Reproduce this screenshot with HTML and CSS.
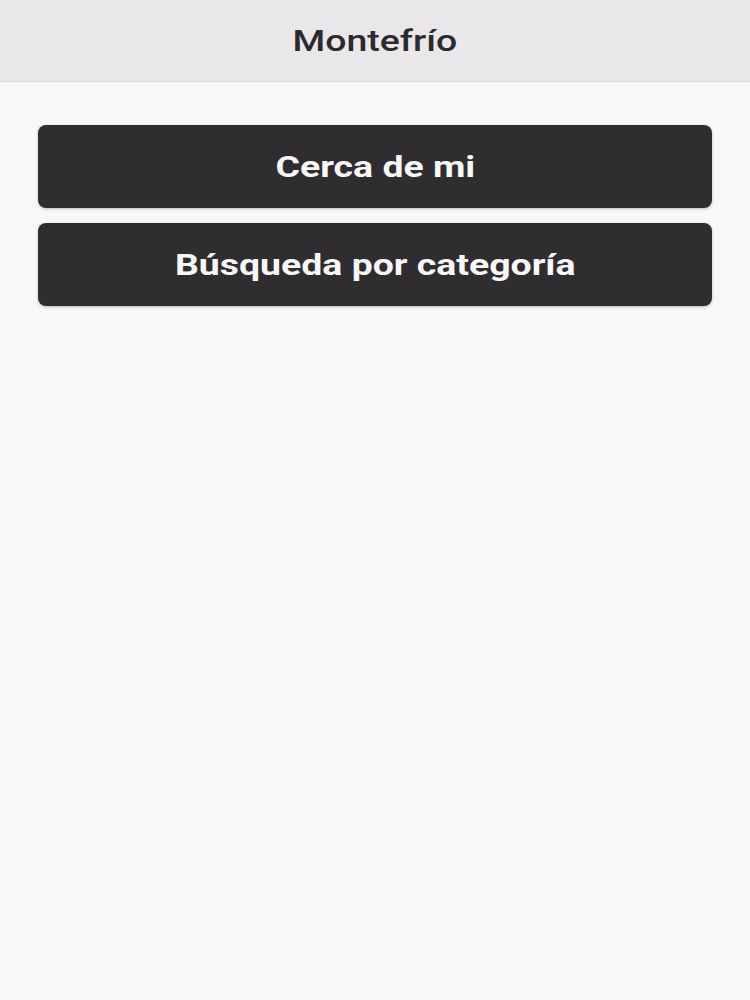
FILE: index.html
```html
<!DOCTYPE html>
<html lang="es">
<head>
<meta charset="utf-8">
<title>Montefrío</title>
<link rel="stylesheet" href="styles.css">
</head>
<body>
<header class="topbar">
  <h1 class="title"><span class="wide">Montefrío</span></h1>
</header>
<main class="content">
  <button class="btn"><span class="wide">Cerca de mi</span></button>
  <button class="btn"><span class="wide">Búsqueda por categoría</span></button>
</main>
</body>
</html>
```
FILE: styles.css
```css
html, body {
  margin: 0;
  padding: 0;
  height: 100%;
}
body {
  background: #f9f7fa;
  font-family: Roboto, "Liberation Sans", sans-serif;
}
.topbar {
  height: 82px;
  background: #e9e7ea;
  border-bottom: 1px solid #dedcdf;
  box-sizing: border-box;
  display: flex;
  align-items: center;
  justify-content: center;
}
.title {
  margin: 0;
  font-size: 29px;
  font-weight: 500;
  color: #2b2a2d;
}
.wide {
  display: inline-block;
  transform: scaleX(1.29);
}
.content {
  padding: 43px 38px 0;
  display: flex;
  flex-direction: column;
  gap: 15px;
}
.btn {
  height: 83px;
  border: none;
  border-radius: 8px;
  background: #302d31;
  color: #f8f8f8;
  font-family: Roboto, "Liberation Sans", sans-serif;
  font-size: 29px;
  font-weight: 700;
  box-shadow: 0 1px 3px rgba(0,0,0,0.25);
  cursor: pointer;
}
```
